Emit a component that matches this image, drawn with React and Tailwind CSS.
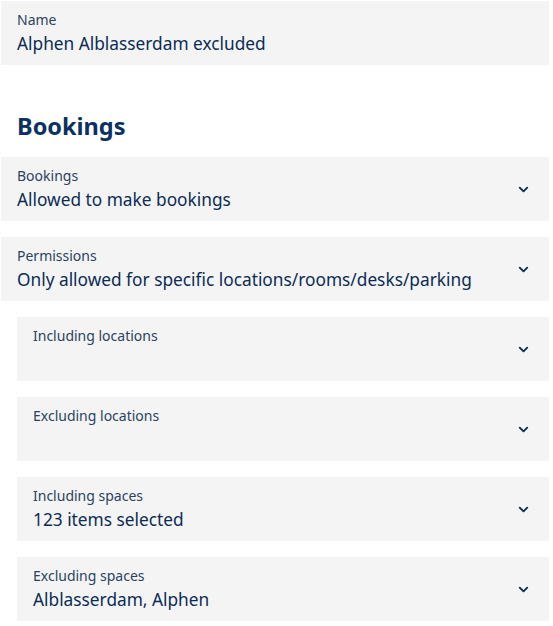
import { ChevronDown } from 'lucide-react'

function Field({ label, value, indent }) {
  return (
    <div className={`flex items-center bg-[#f4f4f4] h-16 pr-[18px] ${indent ? 'ml-4 pl-4' : 'pl-4'}`}>
      <div className="flex-1 min-w-0 self-start pt-[9px]">
        <div className="text-[14px] leading-5 text-[#2b4360]">{label}</div>
        <div className="text-[17.3px] leading-7 text-[#0b2c55]">{value}</div>
      </div>
      <ChevronDown className="w-[15px] h-[15px] text-[#0b2c55]" strokeWidth={3} />
    </div>
  )
}

export default function App() {
  return (
    <div className="w-[553px] pt-px pl-px pr-[4px] bg-white" style={{ fontFamily: '"Noto Sans", sans-serif' }}>
      <div className="bg-[#f4f4f4] h-16 pl-4 pt-[9px]">
        <div className="text-[14px] leading-5 text-[#2b4360]">Name</div>
        <div className="text-[17.3px] leading-7 text-[#0b2c55]">Alphen Alblasserdam excluded</div>
      </div>

      <h2 className="pl-4 pt-[45px] pb-[15px] text-[23.5px] leading-8 font-bold text-[#0a3161]">Bookings</h2>

      <div className="flex flex-col gap-4">
        <Field label="Bookings" value="Allowed to make bookings" />
        <Field label="Permissions" value="Only allowed for specific locations/rooms/desks/parking" />
        <Field label="Including locations" value="" indent />
        <Field label="Excluding locations" value="" indent />
        <Field label="Including spaces" value="123 items selected" indent />
        <Field label="Excluding spaces" value="Alblasserdam, Alphen" indent />
      </div>
    </div>
  )
}
